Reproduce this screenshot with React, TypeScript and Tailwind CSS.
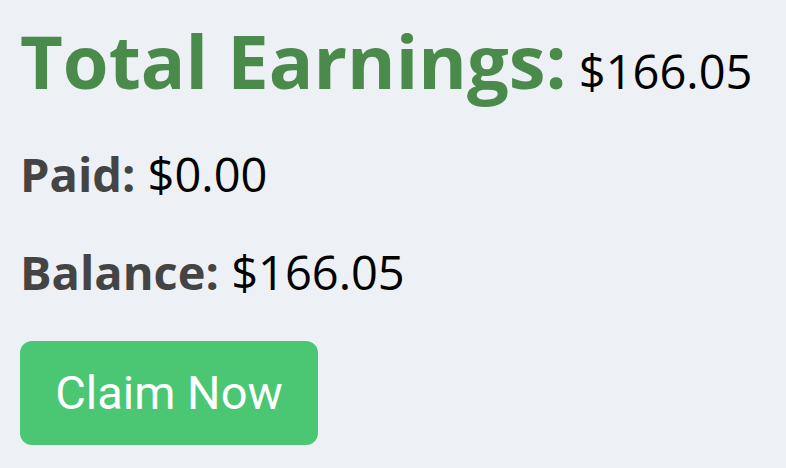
export default function App() {
  return (
    <div
      className="min-h-screen w-full bg-[#edf0f5] px-5 pt-[24px]"
      style={{ fontFamily: '"Open Sans", "Liberation Sans", sans-serif' }}
    >
      <h1 className="text-[74px] leading-none font-bold text-[#4a8a4a] whitespace-nowrap">
        Total Earnings:<span className="text-[47px] font-normal text-black"> $166.05</span>
      </h1>
      <p className="mt-[53px] text-[47px] leading-none text-black whitespace-nowrap">
        <span className="font-bold text-[#444444]">Paid:</span> $0.00
      </p>
      <p className="mt-[51px] text-[47px] leading-none text-black whitespace-nowrap">
        <span className="font-bold text-[#444444]">Balance:</span> $166.05
      </p>
      <button
        className="mt-[45px] flex h-[104px] w-[298px] items-center justify-center rounded-[12px] bg-[#4bc774] text-[47px] text-white"
        style={{ fontFamily: 'Roboto, "Liberation Sans", sans-serif' }}
      >
        Claim Now
      </button>
    </div>
  );
}
